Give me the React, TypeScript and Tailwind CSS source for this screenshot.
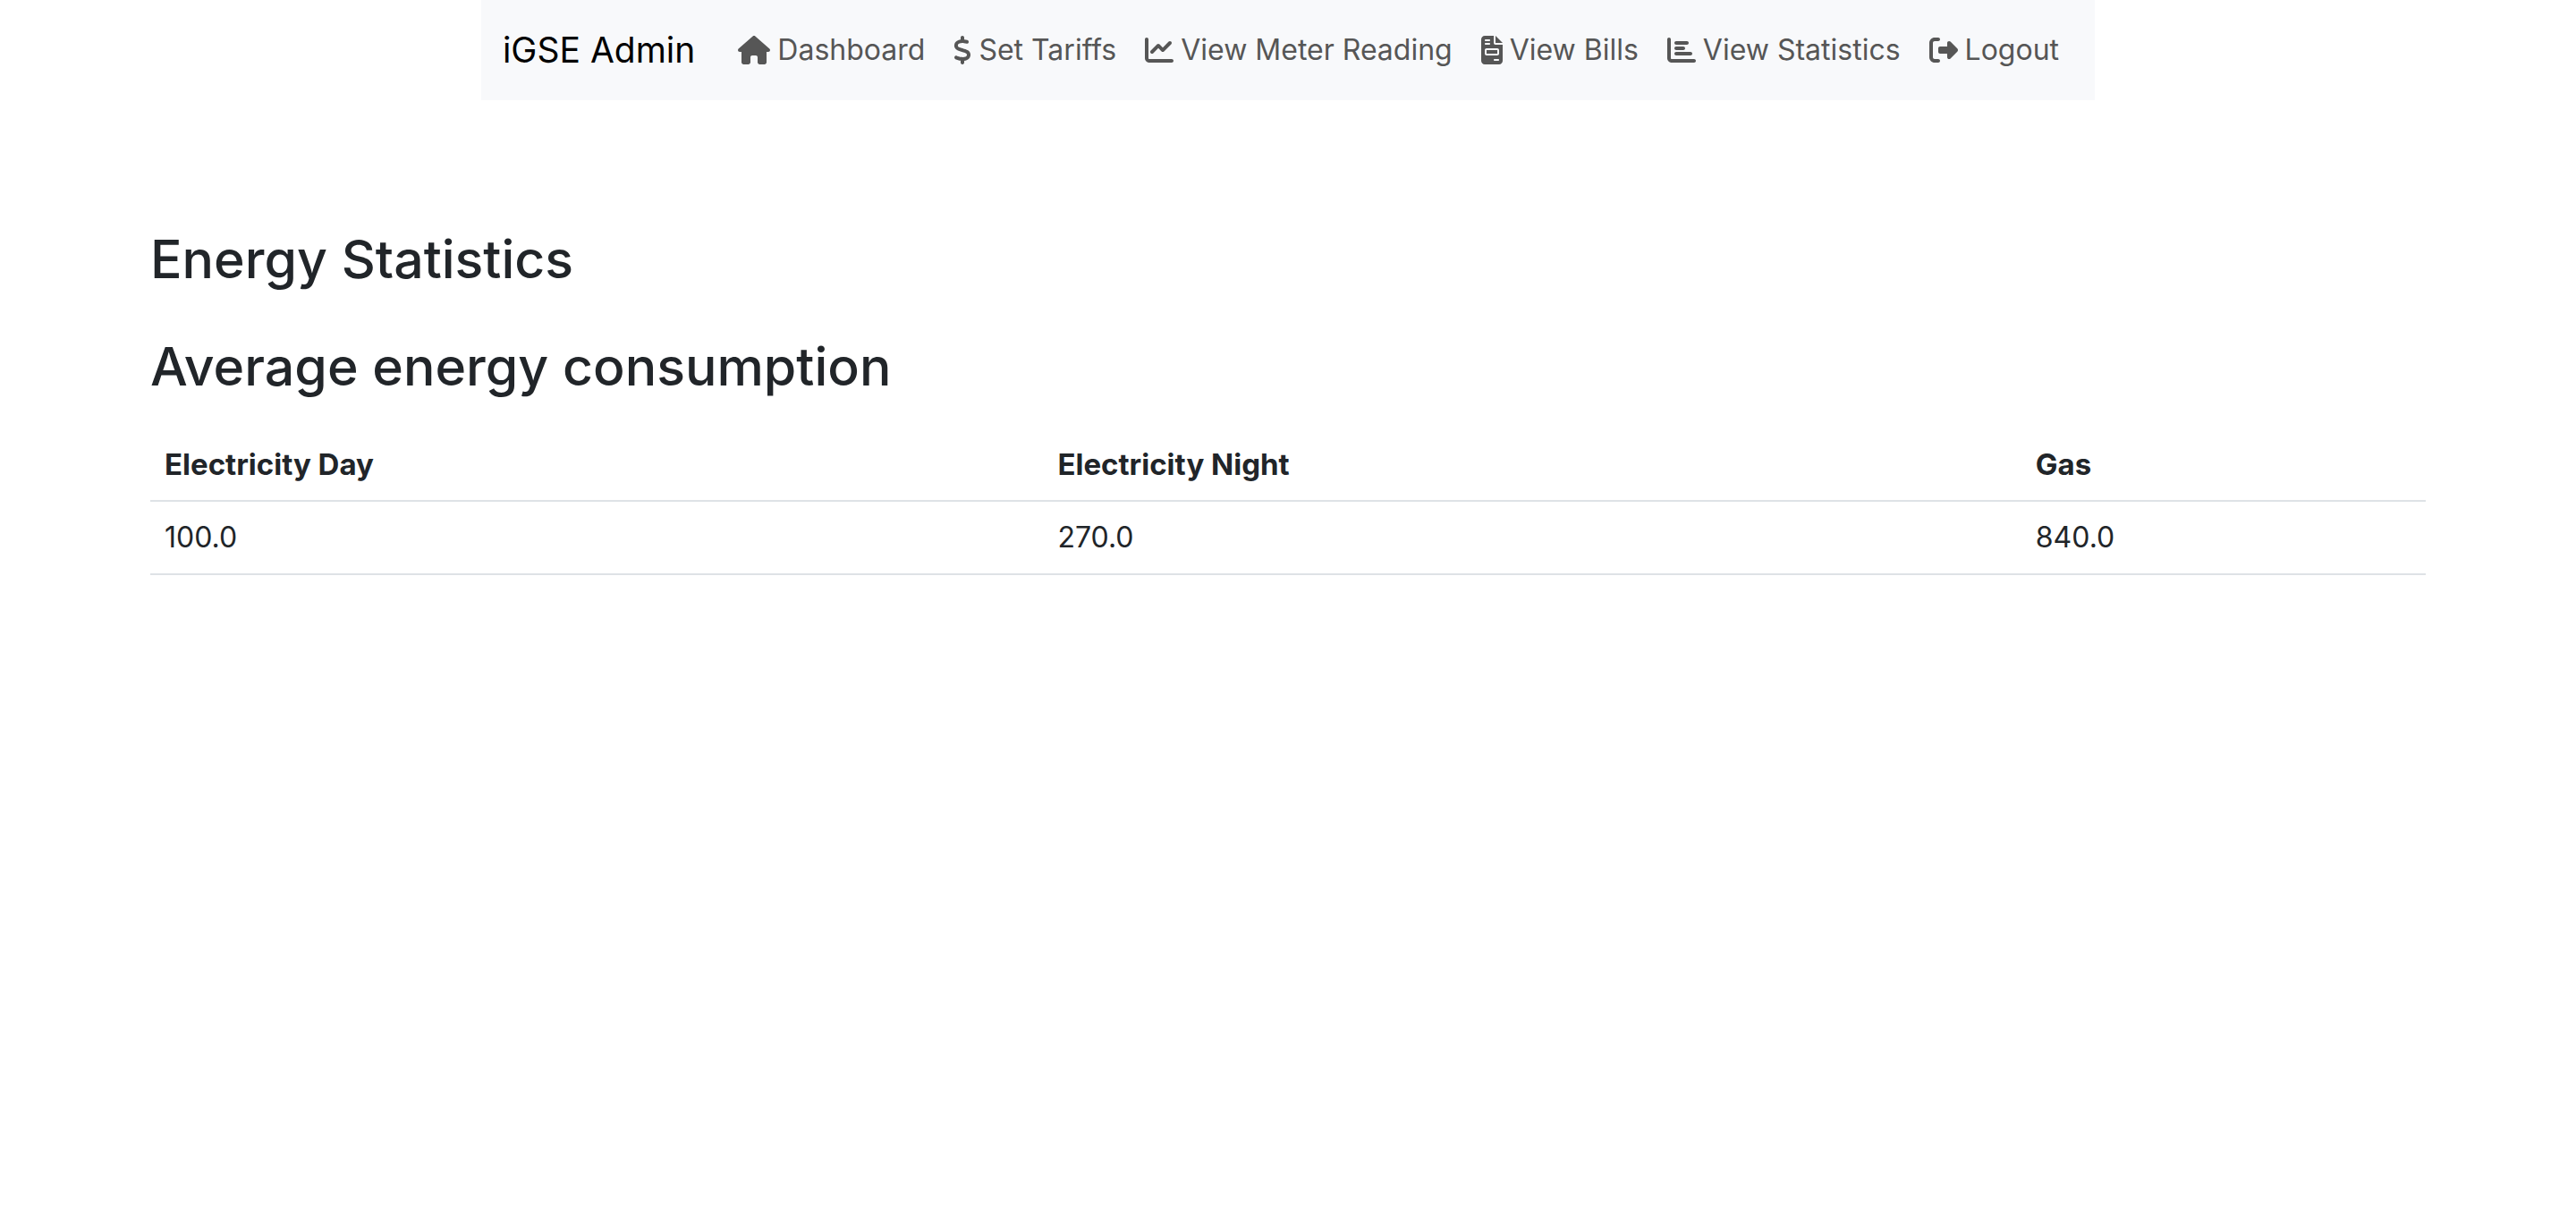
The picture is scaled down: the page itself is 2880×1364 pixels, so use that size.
import { FaHouse, FaDollarSign, FaChartLine, FaFileInvoice, FaChartBar, FaRightFromBracket } from "react-icons/fa6";
import type { ReactNode } from "react";

const links: { label: string; icon: ReactNode }[] = [
  { label: "Dashboard", icon: <FaHouse className="h-8 w-9" /> },
  { label: "Set Tariffs", icon: <FaDollarSign className="h-8 w-5" /> },
  { label: "View Meter Reading", icon: <FaChartLine className="h-8 w-8" /> },
  { label: "View Bills", icon: <FaFileInvoice className="h-8 w-6" /> },
  { label: "View Statistics", icon: <FaChartBar className="h-8 w-8" /> },
  { label: "Logout", icon: <FaRightFromBracket className="h-8 w-8" /> },
];

const columns = ["Electricity Day", "Electricity Night", "Gas"];
const rows = [["100.0", "270.0", "840.0"]];

export default function App() {
  return (
    <div className="min-h-screen bg-white font-['Inter',sans-serif] text-[32px] leading-[48px] text-[#212529]">
      <nav className="mx-auto flex h-28 w-fit items-center bg-[#f8f9fb] px-6 text-[#565656]">
        <a href="#" className="mr-8 text-[39px] whitespace-nowrap text-black">iGSE Admin</a>
        <ul className="flex">
          {links.map((link) => (
            <li key={link.label}>
              <a href="#" className="flex items-center gap-2 px-4 whitespace-nowrap">
                {link.icon}
                {link.label}
              </a>
            </li>
          ))}
        </ul>
      </nav>
      <main className="px-[168px] pt-[140px]">
        <h1 className="text-[59px] leading-[76px] font-medium">Energy Statistics</h1>
        <h2 className="mt-11 text-[59px] leading-[76px] font-medium">Average energy consumption</h2>
        <table className="mt-[31px] w-full text-left">
          <thead>
            <tr className="border-b-2 border-[#dee2e6]">
              {columns.map((column) => (
                <th key={column} scope="col" className="p-4 text-[33px] font-bold">{column}</th>
              ))}
            </tr>
          </thead>
          <tbody>
            {rows.map((row) => (
              <tr key={row[0]} className="border-b-2 border-[#dee2e6]">
                {row.map((cell) => (
                  <td key={cell} className="p-4">{cell}</td>
                ))}
              </tr>
            ))}
          </tbody>
        </table>
      </main>
    </div>
  );
}
